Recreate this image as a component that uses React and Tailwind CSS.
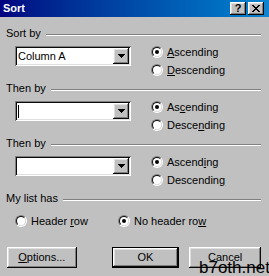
import React from 'react';

const RAISED =
  'shadow-[inset_-1px_-1px_#0a0a0a,inset_1px_1px_#ffffff,inset_-2px_-2px_#808080,inset_2px_2px_#dfdfdf]';
const SUNKEN =
  'shadow-[inset_1px_1px_#808080,inset_-1px_-1px_#ffffff,inset_2px_2px_#0a0a0a,inset_-2px_-2px_#dfdfdf]';

const Radio = ({ checked }) => (
  <span className="w-[12px] h-[12px] shrink-0 rounded-full border border-t-[#808080] border-l-[#808080] border-b-white border-r-white flex">
    <span className="flex-1 rounded-full border border-t-[#0a0a0a] border-l-[#0a0a0a] border-b-[#dfdfdf] border-r-[#dfdfdf] bg-white flex items-center justify-center">
      {checked && <span className="w-[4px] h-[4px] rounded-full bg-black" />}
    </span>
  </span>
);

const Arrow = () => (
  <svg width="7" height="4" viewBox="0 0 7 4" shapeRendering="crispEdges">
    <rect x="0" y="0" width="7" height="1" fill="#000" />
    <rect x="1" y="1" width="5" height="1" fill="#000" />
    <rect x="2" y="2" width="3" height="1" fill="#000" />
    <rect x="3" y="3" width="1" height="1" fill="#000" />
  </svg>
);

const CloseGlyph = () => (
  <svg width="8" height="7" viewBox="0 0 8 7" shapeRendering="crispEdges">
    <rect x="0" y="0" width="2" height="1" fill="#000" />
    <rect x="6" y="0" width="2" height="1" fill="#000" />
    <rect x="1" y="1" width="2" height="1" fill="#000" />
    <rect x="5" y="1" width="2" height="1" fill="#000" />
    <rect x="2" y="2" width="4" height="1" fill="#000" />
    <rect x="3" y="3" width="2" height="1" fill="#000" />
    <rect x="2" y="4" width="4" height="1" fill="#000" />
    <rect x="1" y="5" width="2" height="1" fill="#000" />
    <rect x="5" y="5" width="2" height="1" fill="#000" />
    <rect x="0" y="6" width="2" height="1" fill="#000" />
    <rect x="6" y="6" width="2" height="1" fill="#000" />
  </svg>
);

const GroupLabel = ({ children }) => (
  <div className="flex items-start h-[13px]">
    <span className="whitespace-nowrap">{children}</span>
    <div className="flex-1 ml-[5px] mt-[7px] h-[2px] border-t border-t-[#808080] border-b border-b-white" />
  </div>
);

const Combo = ({ value, caret }) => (
  <div className={`ml-[9px] w-[116px] h-[20px] shrink-0 flex p-[2px] bg-white ${SUNKEN}`}>
    <div className="flex-1 pl-[1px] flex items-center text-black">
      {caret && <span className="w-[1px] h-[13px] bg-black" />}
      {value}
    </div>
    <div className={`w-[16px] h-full bg-[#c0c0c0] flex items-center justify-center ${RAISED}`}>
      <Arrow />
    </div>
  </div>
);

const Option = ({ checked, label }) => (
  <div className="flex items-center h-[12px]">
    <Radio checked={checked} />
    <span className="ml-[4px] whitespace-nowrap">{label}</span>
  </div>
);

const SortGroup = ({ title, value, caret, asc, desc }) => (
  <div className="flex flex-col">
    <GroupLabel>{title}</GroupLabel>
    <div className="flex mt-[6px]">
      <Combo value={value} caret={caret} />
      <div className="ml-[20px] flex flex-col gap-[6px]">
        <Option checked label={asc} />
        <Option label={desc} />
      </div>
    </div>
  </div>
);

export default function App() {
  return (
    <div className="relative w-[269px] h-[276px] overflow-hidden bg-[#c0c0c0] text-black text-[11px] leading-[13px] font-['Liberation_Sans',Arial,sans-serif]">
      {/* caption */}
      <div className="h-[17px] flex items-start bg-gradient-to-r from-[#000080] to-[#1084d0]">
        <span className="pl-[3px] mt-[2px] text-white font-bold">Sort</span>
        <div className="ml-auto mr-[5px] mt-[2px] flex gap-[2px]">
          <div className={`w-[16px] h-[13px] bg-[#c0c0c0] flex items-center justify-center font-bold text-[11px] leading-[11px] ${RAISED}`}>
            ?
          </div>
          <div className={`w-[16px] h-[13px] bg-[#c0c0c0] flex items-center justify-center ${RAISED}`}>
            <CloseGlyph />
          </div>
        </div>
      </div>

      <div className="pl-[6px] pr-[8px] pt-[10px] flex flex-col">
        <div className="flex flex-col gap-[6px]">
          <SortGroup
            title="Sort by"
            value="Column A"
            asc={<><u>A</u>scending</>}
            desc={<><u>D</u>escending</>}
          />
          <SortGroup
            title="Then by"
            caret
            asc={<>As<u>c</u>ending</>}
            desc={<>Desce<u>n</u>ding</>}
          />
          <SortGroup
            title="Then by"
            asc={<>Ascend<u>i</u>ng</>}
            desc={<>Descendin<u>g</u></>}
          />
        </div>

        <div className="mt-[6px]">
          <GroupLabel>My list has</GroupLabel>
        </div>
        <div className="flex mt-[10px] ml-[9px]">
          <div className="w-[103px]">
            <Option label={<>Header <u>r</u>ow</>} />
          </div>
          <Option checked label={<>No header ro<u>w</u></>} />
        </div>

        <div className="flex mt-[20px] ml-[1px]">
          <button className={`w-[70px] h-[21px] bg-[#c0c0c0] flex items-center justify-center ${RAISED}`}>
            <span><u>O</u>ptions...</span>
          </button>
          <button className="ml-[35px] w-[68px] h-[21px] border border-black bg-[#c0c0c0]">
            <div className={`w-full h-full flex items-center justify-center ${RAISED}`}>OK</div>
          </button>
          <button className={`ml-[10px] w-[72px] h-[21px] bg-[#c0c0c0] flex items-center justify-center ${RAISED}`}>
            Cancel
          </button>
        </div>
      </div>

      <span className="absolute left-[199px] top-[259px] text-[17px] leading-[17px] text-black">b7oth.net</span>
    </div>
  );
}
